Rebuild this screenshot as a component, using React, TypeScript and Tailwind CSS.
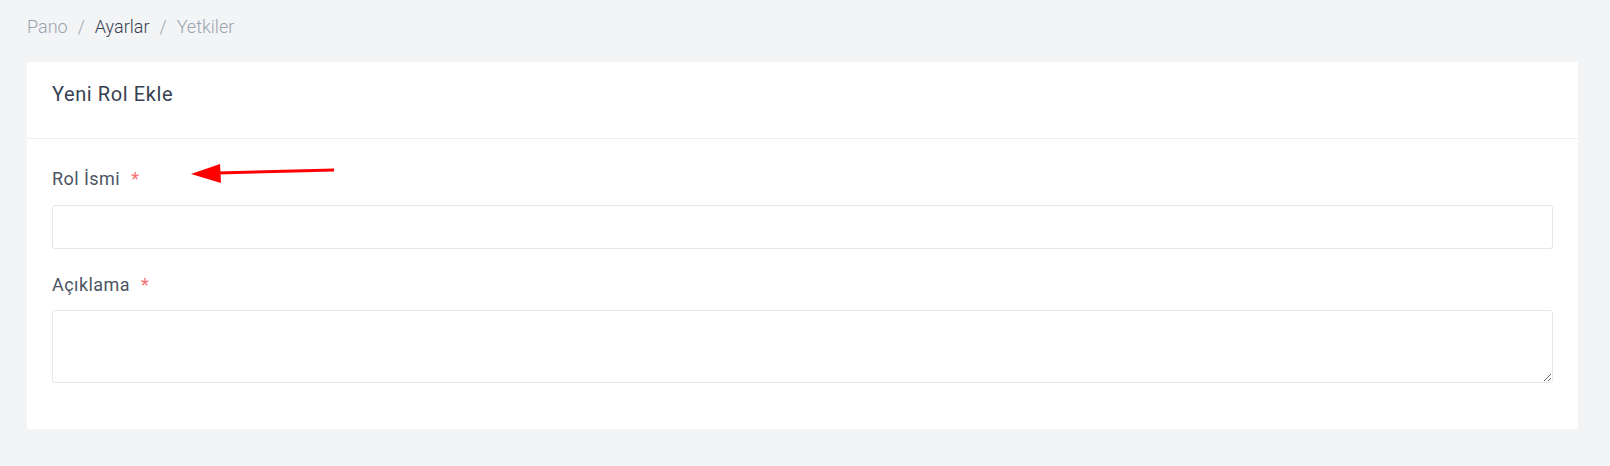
export default function App() {
  return (
    <div className="min-h-[466px] bg-[#f3f4f6] pt-[16px] pb-[37px] font-['Roboto',sans-serif]">
      <nav className="ml-[27px] flex items-center gap-[10px] text-[18px] font-light leading-[22px]">
        <span className="text-[#9ca3af]">Pano</span>
        <span className="text-[#9ca3af]">/</span>
        <span className="text-[#374151]">Ayarlar</span>
        <span className="text-[#9ca3af]">/</span>
        <span className="text-[#9ca3af]">Yetkiler</span>
      </nav>

      <div className="ml-[27px] mr-[32px] mt-[24px] bg-white">
        <div className="h-[77px] border-b border-[#eeeff1] px-[25px] pt-[18px]">
          <h1 className="text-[20px] font-normal leading-[28px] tracking-[0.03em] text-[#374151]">Yeni Rol Ekle</h1>
        </div>

        <div className="px-[25px] pt-[29px] pb-[46px]">
          <div className="relative">
            <label className="flex items-center gap-[11px] text-[18px] leading-[22px] tracking-[0.025em] text-[#4b5563]">
              Rol İsmi <span className="text-[#f87171]">*</span>
            </label>
            <svg
              className="absolute left-[139px] top-[-8px]"
              width="145"
              height="24"
              viewBox="0 0 145 24"
            >
              <line x1="26" y1="13" x2="143" y2="10" stroke="#ff0000" strokeWidth="3" />
              <polygon points="0,14 29,4 30,23" fill="#ff0000" />
            </svg>
            <input
              type="text"
              className="mt-[15px] block h-[44px] w-full rounded-[3px] border border-[#e5e7eb] px-3 outline-none"
            />
          </div>

          <div className="mt-[25px]">
            <label className="flex items-center gap-[11px] text-[18px] leading-[22px] tracking-[0.025em] text-[#4b5563]">
              Açıklama <span className="text-[#f87171]">*</span>
            </label>
            <textarea className="mt-[14px] block h-[73px] w-full rounded-[3px] border border-[#e5e7eb] px-3 py-2 outline-none" />
          </div>
        </div>
      </div>
    </div>
  )
}
